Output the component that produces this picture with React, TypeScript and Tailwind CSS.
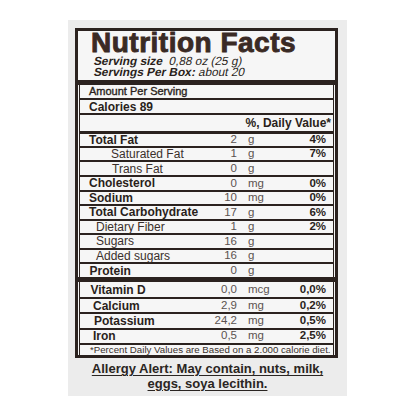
import React from "react";

type Row = {
  label: string;
  bold?: boolean;
  pl: string;
  amt?: string;
  unit?: string;
  pct?: string;
  h: string;
  top?: string;
};

const dark = "border-[#2b221f]";

function NRow({ r }: { r: Row }) {
  return (
    <div className={`flex items-center ${r.h} ${r.top ?? ""} ${dark} ${r.pl}`}>
      <div
        className={`min-w-0 flex-1 whitespace-nowrap text-[12px] leading-none ${
          r.bold ? "font-bold text-[#2a1f1b]" : "text-[#3a302c]"
        }`}
      >
        {r.label}
      </div>
      <div className="w-[30px] text-right text-[11.5px] leading-none text-[#5b5350]">{r.amt}</div>
      <div className="ml-[11px] w-[40px] text-[11.5px] leading-none text-[#5b5350]">{r.unit}</div>
      <div className="w-[45px] pr-[7px] text-right text-[11.5px] font-bold leading-none text-[#2a1f1b]">
        {r.pct}
      </div>
    </div>
  );
}

const rowsA: Row[] = [
  { label: "Total Fat", bold: true, pl: "pl-[9px]", amt: "2", unit: "g", pct: "4%", h: "h-[14.55px]", top: "border-t-[3px]" },
  { label: "Saturated Fat", pl: "pl-[31px]", amt: "1", unit: "g", pct: "7%", h: "h-[14.55px]", top: "border-t-2" },
  { label: "Trans Fat", pl: "pl-[32px]", amt: "0", unit: "g", h: "h-[14.55px]", top: "border-t-2" },
  { label: "Cholesterol", bold: true, pl: "pl-[9px]", amt: "0", unit: "mg", pct: "0%", h: "h-[14.55px]", top: "border-t-2" },
  { label: "Sodium", bold: true, pl: "pl-[9px]", amt: "10", unit: "mg", pct: "0%", h: "h-[14.55px]", top: "border-t-2" },
  { label: "Total Carbohydrate", bold: true, pl: "pl-[9px]", amt: "17", unit: "g", pct: "6%", h: "h-[14.55px]", top: "border-t-2" },
  { label: "Dietary Fiber", pl: "pl-[16px]", amt: "1", unit: "g", pct: "2%", h: "h-[14.55px]", top: "border-t-2" },
  { label: "Sugars", pl: "pl-[16px]", amt: "16", unit: "g", h: "h-[14.55px]", top: "border-t-2" },
  { label: "Added sugars", pl: "pl-[16px]", amt: "16", unit: "g", h: "h-[14.55px]", top: "border-t-2" },
  { label: "Protein", bold: true, pl: "pl-[9.5px]", amt: "0", unit: "g", h: "h-[14.55px]", top: "border-t-2" },
];

const rowsB: Row[] = [
  { label: "Vitamin D", bold: true, pl: "pl-[10.5px]", amt: "0,0", unit: "mcg", pct: "0,0%", h: "h-[15px]" },
  { label: "Calcium", bold: true, pl: "pl-[13px]", amt: "2,9", unit: "mg", pct: "0,2%", h: "h-[15.1px]", top: "border-t-2" },
  { label: "Potassium", bold: true, pl: "pl-[14px]", amt: "24,2", unit: "mg", pct: "0,5%", h: "h-[15.1px]", top: "border-t-2" },
  { label: "Iron", bold: true, pl: "pl-[13px]", amt: "0,5", unit: "mg", pct: "2,5%", h: "h-[15.1px]", top: "border-t-2" },
];

export default function App() {
  return (
    <div className="min-h-[416px] w-[416px] bg-white font-['Liberation_Sans',Arial,sans-serif]">
      <div className="h-[20px]" />
      <div className="ml-[68px] flex h-[376px] w-[279px] flex-col bg-[#ececec] pl-[7px] pt-[8px]">
        <div className="w-[263px] border-[3px] border-[#2b221f] bg-[#f6f6f6]">
          {/* Title */}
          <div className="h-[50px]">
            <div className="-mt-[0.65px] whitespace-nowrap pl-[13px] text-[28px] font-bold leading-[26px] tracking-[0.5px] text-[#3a2a24] [-webkit-text-stroke:0.9px_#3a2a24]">
              Nutrition Facts
            </div>
            <div className="whitespace-nowrap pl-[16px] text-[11.8px] leading-[10.5px] text-[#2a1f1b]">
              <div className="w-fit -skew-x-12">
                <span className="font-bold">Serving size</span>
                {"\u00a0\u00a0"}0,88 oz (25 g)
              </div>
              <div className="w-fit -skew-x-12">
                <span className="font-bold">Servings Per Box:</span> about 20
              </div>
            </div>
          </div>
          <div className="h-[5px] bg-[#2b221f]" />
          <div className={`mx-[1px] border-x ${dark}`}>
            <div className="flex h-[13px] items-center whitespace-nowrap pl-[9px] text-[11px] leading-none text-[#2a1f1b] [-webkit-text-stroke:0.35px_#2a1f1b]">
              Amount Per Serving
            </div>
            <div className={`flex h-[15px] items-center border-t-2 ${dark} pl-[9px] text-[12px] font-bold leading-none text-[#2a1f1b]`}>
              Calories 89
            </div>
            <div className={`flex h-[18px] items-center justify-end border-t-2 ${dark} pr-[2px] text-[12px] font-bold leading-none text-[#2a1f1b]`}>
              %, Daily Value*
            </div>
            {rowsA.map((r) => (
              <NRow key={r.label} r={r} />
            ))}
          </div>
          <div className="h-[5.5px] bg-[#2b221f]" />
          <div className={`mx-[1px] border-x ${dark}`}>
            {rowsB.map((r) => (
              <NRow key={r.label} r={r} />
            ))}
            <div className={`flex h-[12.5px] items-center border-t-2 ${dark} whitespace-nowrap pl-[10px] text-[9.7px] leading-none text-[#3a302c]`}>
              *Percent Daily Values are Based on a 2.000 calorie diet.
            </div>
          </div>
        </div>
        <div className="mt-[4px] pr-[7px] text-center text-[13px] font-bold leading-[14.5px] text-[#2a2522] underline underline-offset-[1.5px]">
          Allergy Alert: May contain, nuts, milk,
          <br />
          eggs, soya lecithin.
        </div>
      </div>
    </div>
  );
}
